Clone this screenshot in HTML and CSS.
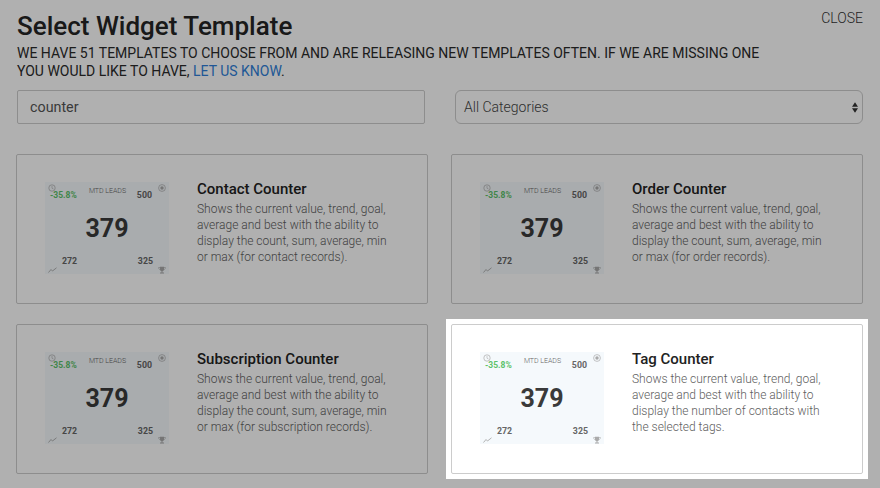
FILE: index.html
```html
<!DOCTYPE html>
<html lang="en">
<head>
<meta charset="utf-8">
<title>Select Widget Template</title>
<link rel="stylesheet" href="styles.css">
</head>
<body>
<svg class="defs" width="0" height="0" aria-hidden="true">
  <symbol id="clock" viewBox="0 0 8 8"><circle cx="4" cy="4" r="3.2" fill="none" stroke="currentColor" stroke-width=".7"/><path d="M4 2v2.2l1.5.8" fill="none" stroke="currentColor" stroke-width=".6"/></symbol>
  <symbol id="target" viewBox="0 0 8 8"><circle cx="4" cy="4" r="3.4" fill="none" stroke="currentColor" stroke-width=".7"/><circle cx="4" cy="4" r="1.700" fill="currentColor"/></symbol>
  <symbol id="trend" viewBox="0 0 9 6"><path d="M.5 5.5 3 2.5l1.5 1.5L8.500.8" fill="none" stroke="currentColor" stroke-width=".9"/></symbol>
  <symbol id="trophy" viewBox="0 0 8 8"><path d="M2 .8h4v2.6C6 4.600 5 5 4.500 5.200V6.400H6V7.400H2V6.400H3.500V5.200C3 5 2 4.600 2 3.400Z" fill="currentColor"/><path d="M2 1.500H.6c0 1.300.6 2 1.600 2.200M6 1.500h1.400c0 1.300-.6 2-1.600 2.200" fill="none" stroke="currentColor" stroke-width=".6"/></symbol>
</svg>
<main class="page">
  <header class="head">
    <div class="head-text">
      <h1 class="title">Select Widget Template</h1>
      <p class="lead">We have 51 templates to choose from and are releasing new templates often. If we are missing one<br>you would like to have, <a class="lead-link" href="#">let us know</a>.</p>
    </div>
    <a class="close" href="#">Close</a>
  </header>
  <div class="filters">
    <input class="field" type="text" value="counter" aria-label="Search">
    <div class="select-wrap">
      <span class="select-label">All Categories</span>
      <svg class="select-arrows" width="6" height="11" viewBox="0 0 7 12"><path d="M3.500 0 7 5H0ZM3.500 12 0 7H7Z" fill="currentColor"/></svg>
    </div>
  </div>
  <section class="cards">
    <article class="card">
      <div class="thumb">
        <div class="thumb-icons"><svg class="ti"><use href="#clock"/></svg><svg class="ti"><use href="#target"/></svg></div>
        <div class="thumb-top"><span class="delta">-35.8%</span><span class="metric">MTD LEADS</span><span class="num">500</span></div>
        <div class="big">379</div>
        <div class="thumb-low"><span class="num">272</span><span class="num">325</span></div>
        <div class="thumb-icons"><svg class="ti ti-wide"><use href="#trend"/></svg><svg class="ti"><use href="#trophy"/></svg></div>
      </div>
      <div class="info"><h2 class="name">Contact Counter</h2><p class="desc">Shows the current value, trend, goal, average and best with the ability to display the count, sum, average, min or max (for contact records).</p></div>
    </article>
    <article class="card">
      <div class="thumb">
        <div class="thumb-icons"><svg class="ti"><use href="#clock"/></svg><svg class="ti"><use href="#target"/></svg></div>
        <div class="thumb-top"><span class="delta">-35.8%</span><span class="metric">MTD LEADS</span><span class="num">500</span></div>
        <div class="big">379</div>
        <div class="thumb-low"><span class="num">272</span><span class="num">325</span></div>
        <div class="thumb-icons"><svg class="ti ti-wide"><use href="#trend"/></svg><svg class="ti"><use href="#trophy"/></svg></div>
      </div>
      <div class="info"><h2 class="name">Order Counter</h2><p class="desc">Shows the current value, trend, goal, average and best with the ability to display the count, sum, average, min or max (for order records).</p></div>
    </article>
    <article class="card">
      <div class="thumb">
        <div class="thumb-icons"><svg class="ti"><use href="#clock"/></svg><svg class="ti"><use href="#target"/></svg></div>
        <div class="thumb-top"><span class="delta">-35.8%</span><span class="metric">MTD LEADS</span><span class="num">500</span></div>
        <div class="big">379</div>
        <div class="thumb-low"><span class="num">272</span><span class="num">325</span></div>
        <div class="thumb-icons"><svg class="ti ti-wide"><use href="#trend"/></svg><svg class="ti"><use href="#trophy"/></svg></div>
      </div>
      <div class="info"><h2 class="name">Subscription Counter</h2><p class="desc">Shows the current value, trend, goal, average and best with the ability to display the count, sum, average, min or max (for subscription records).</p></div>
    </article>
    <div class="halo">
    <article class="card">
      <div class="thumb">
        <div class="thumb-icons"><svg class="ti"><use href="#clock"/></svg><svg class="ti"><use href="#target"/></svg></div>
        <div class="thumb-top"><span class="delta">-35.8%</span><span class="metric">MTD LEADS</span><span class="num">500</span></div>
        <div class="big">379</div>
        <div class="thumb-low"><span class="num">272</span><span class="num">325</span></div>
        <div class="thumb-icons"><svg class="ti ti-wide"><use href="#trend"/></svg><svg class="ti"><use href="#trophy"/></svg></div>
      </div>
      <div class="info"><h2 class="name">Tag Counter</h2><p class="desc">Shows the current value, trend, goal, average and best with the ability to display the number of contacts with the selected tags.</p></div>
    </article>
    </div>
  </section>
</main>
<div class="scrim"></div>
</body>
</html>
```
FILE: styles.css
```css
* { box-sizing: border-box; }
html, body { margin: 0; height: 100%; }
body {
  background: #fff;
  color: #222;
  font-family: Roboto, "Liberation Sans", sans-serif;
  overflow: hidden;
}
.defs { display: block; height: 0; }
.page { padding: 10px 17px 0 17px; width: 880px; height: 488px; }
.head { display: flex; justify-content: space-between; align-items: flex-start; }
.title { margin: 0; font-size: 26px; line-height: 32px; font-weight: 500; color: #252525; }
.lead { margin: 2px 0 0; font-size: 14px; line-height: 18px; text-transform: uppercase; color: #2a2a2a; }
.lead-link { color: #2f7fd9; text-decoration: none; }
.close { font-size: 14px; line-height: 16px; margin: 0; text-transform: uppercase; color: #333; text-decoration: none; font-weight: 300; }
.filters { display: grid; grid-template-columns: 408px 408px; justify-content: space-between; margin-top: 10px; }
.field, .select-wrap {
  height: 34px;
  border: 1px solid #ccc;
  background: #fff;
  font: 400 14.300px Roboto, "Liberation Sans", sans-serif;
  color: #555;
}
.field { border-radius: 2px; padding: 0 12px; width: 100%; }
.select-wrap { font-size: 14px; font-weight: 300; color: #444; border-radius: 6px; padding: 0 4px 0 8px; display: flex; align-items: center; justify-content: space-between; }
.select-arrows { color: #333; }
.cards { display: grid; grid-template-columns: 412px 412px; justify-content: space-between; grid-auto-rows: 150px; row-gap: 20px; margin: 30px 0 0 -1px; }
.card { display: flex; align-items: flex-start; padding: 27px 29px 0 28px; border: 1px solid #ccc; border-radius: 2px; background: #fff; height: 150px; }
.halo { position: relative; z-index: 3; background: #fff; margin: -5px; padding: 5px; height: 160px; }
.thumb { flex: none; width: 124px; height: 92px; padding: 2px 3px 0; background: #f5f9fc; display: flex; flex-direction: column; color: #777; }
.thumb-icons { display: flex; justify-content: space-between; height: 8px; flex: none; }
.ti { width: 8px; height: 8px; color: #aaa; }
.ti-wide { width: 9px; }
.thumb-top { display: grid; grid-template-columns: 1fr auto 1fr; align-items: center; margin-top: -3px; padding: 0 1px 0 2px; height: 12px; flex: none; }
.delta { font-size: 8.500px; font-weight: 700; color: #5cc26a; }
.metric { font-size: 7px; font-weight: 300; color: #666; position: relative; top: -4px; }
.num { font-size: 8.800px; font-weight: 700; color: #666; }
.thumb-top .num { justify-self: end; margin-right: 13px; }
.big { flex: none; height: 38px; line-height: 38px; margin-top: 9px; text-align: center; font-size: 25px; font-weight: 700; color: #3a3a3a; }
.thumb-low { flex: none; display: flex; justify-content: space-between; padding: 0 13px 0 14px; height: 12px; line-height: 12px; margin-top: 7px; margin-bottom: -1px; }
.info { flex: none; width: 196px; margin-left: 28px; margin-top: -1px; }
.name { margin: 0; font-size: 15px; line-height: 17px; font-weight: 500; color: #222; }
.desc { margin: 3px 0 0; font-size: 12px; line-height: 16px; font-weight: 300; color: #606060; }
.scrim { position: fixed; inset: 0; background: rgba(0, 0, 0, .31); z-index: 2; }
```
